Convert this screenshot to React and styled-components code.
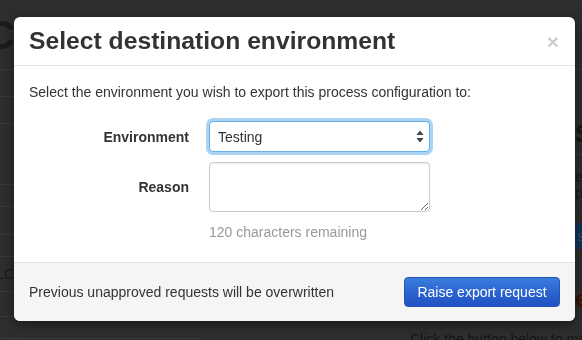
import React from 'react';
import styled, { createGlobalStyle } from 'styled-components';

const GlobalStyle = createGlobalStyle`
  html, body { margin: 0; padding: 0; }
  body {
    background: #2e2e2e;
    font-family: "Liberation Sans", Arial, sans-serif;
    overflow: hidden;
  }
`;

/* ---------- dimmed page behind the dialog ---------- */
const Page = styled.div`
  width: 582px;
  height: 340px;
  background: #2e2e2e;
  display: flex;
  flex-direction: column;
  overflow: hidden;
`;

const TopBar = styled.header`
  height: 70px;
  flex: none;
  display: flex;
  align-items: center;
  border-bottom: 1px solid #383838;
  box-sizing: border-box;
`;

const Logo = styled.span`
  margin-left: -14px;
  font-size: 40px;
  font-weight: bold;
  color: #1c1c1c;
  line-height: 1;
`;

const Columns = styled.div`
  flex: 1;
  display: grid;
  grid-template-columns: 200px 1fr;
`;

const Sidebar = styled.div`
  display: flex;
  flex-direction: column;
`;

const SideRow = styled.div`
  height: ${p => p.$h}px;
  flex: none;
  box-sizing: border-box;
  border-bottom: 1px solid #3a3a3a;
  font-size: 14px;
  color: #1a1a1a;
  display: flex;
  align-items: center;
  justify-content: flex-end;
  padding-right: 186px;
  white-space: nowrap;
`;

const Main = styled.div`
  display: flex;
  flex-direction: column;
  padding-left: 210px;
  padding-top: 50px;
`;

const BgHeading = styled.div`
  font-size: 24px;
  font-weight: bold;
  color: #181818;
  white-space: nowrap;
  margin-left: 165px;
  padding-bottom: 6px;
  border-bottom: 1px solid #3a3a3a;
`;

const BgText = styled.div`
  font-size: 14px;
  color: #1a1a1a;
  line-height: 16px;
  white-space: nowrap;
  margin-left: 165px;
  margin-top: ${p => p.$mt || 0}px;
`;

const BgButton = styled.div`
  margin: 22px 0 0 165px;
  height: 26px;
  width: 120px;
  background: #13335a;
  color: #3a4a60;
  font-size: 14px;
  line-height: 26px;
  padding-left: 2px;
`;

const BgRed = styled.div`
  margin: 36px 0 0 165px;
  font-size: 24px;
  font-weight: bold;
  color: #3e1208;
`;

const BgFoot = styled.div`
  margin-top: 18px;
  font-size: 14px;
  color: #151515;
  white-space: nowrap;
`;

/* ---------- dialog ---------- */
const Modal = styled.div`
  position: fixed;
  top: 17px;
  left: 14px;
  width: 561px;
  background: #fff;
  border-radius: 6px;
  box-shadow: 0 3px 12px rgba(0, 0, 0, 0.5);
  overflow: hidden;
  color: #333;
`;

const Header = styled.div`
  height: 49px;
  box-sizing: border-box;
  padding: 0 16px 0 15px;
  display: flex;
  align-items: center;
  justify-content: space-between;
  border-bottom: 1px solid #e5e5e5;
`;

const Title = styled.h3`
  margin: 0;
  font-size: 24.7px;
  font-weight: bold;
  color: #333;
`;

const Close = styled.button`
  border: 0;
  background: none;
  padding: 0;
  font-family: inherit;
  font-size: 21px;
  font-weight: bold;
  color: #000;
  opacity: 0.2;
  line-height: 1;
  cursor: pointer;
`;

const Body = styled.div`
  padding: 15px 15px 19px;
`;

const Intro = styled.p`
  margin: 0;
  font-size: 14px;
  line-height: 22px;
`;

const Form = styled.div`
  margin-top: 18px;
  display: grid;
  grid-template-columns: 160px 221px;
  column-gap: 20px;
  row-gap: 10px;
  align-items: center;
`;

const Label = styled.label`
  text-align: right;
  font-size: 14px;
  font-weight: bold;
  color: #333;
`;

const SelectWrap = styled.div`
  position: relative;
  height: 31px;
`;

const Select = styled.select`
  appearance: none;
  -webkit-appearance: none;
  width: 100%;
  height: 31px;
  box-sizing: border-box;
  border: 1px solid #66afe9;
  border-radius: 4px;
  box-shadow: 0 0 0 3px rgba(102, 175, 233, 0.55);
  padding: 0 8px;
  font-family: inherit;
  font-size: 14px;
  color: #333;
  background: #fff;
  outline: none;
`;

const Arrows = styled.svg`
  position: absolute;
  right: 6px;
  top: 9px;
  pointer-events: none;
`;

const Textarea = styled.textarea`
  display: block;
  width: 100%;
  height: 50px;
  box-sizing: border-box;
  border: 1px solid #ccc;
  border-radius: 4px;
  box-shadow: inset 0 1px 1px rgba(0, 0, 0, 0.075);
  resize: vertical;
  font-family: inherit;
  font-size: 14px;
`;

const Help = styled.div`
  grid-column: 2;
  margin-top: -1px;
  font-size: 14px;
  line-height: 22px;
  color: #999;
`;

const Footer = styled.div`
  border-top: 1px solid #e5e5e5;
  background: #f5f5f5;
  padding: 14px 15px 14px;
  display: flex;
  align-items: center;
  justify-content: space-between;
`;

const FooterText = styled.span`
  font-size: 14px;
  color: #333;
`;

const PrimaryButton = styled.button`
  width: 156px;
  height: 30px;
  border: 1px solid #2553b5;
  border-radius: 4px;
  background: linear-gradient(to bottom, #3a7ddd 0%, #2a62d0 55%, #2252c2 100%);
  color: #fff;
  font-family: inherit;
  font-size: 14px;
  padding: 0;
  cursor: pointer;
`;

const sideRows = [27, 27, 61, 22, 28, 22, 35, 25, 22, 22];

export default function App() {
  return (
    <>
      <GlobalStyle />
      <Page>
        <TopBar>
          <Logo>C</Logo>
        </TopBar>
        <Columns>
          <Sidebar>
            {sideRows.map((h, i) => (
              <SideRow key={i} $h={h}>{i === 6 ? 'ETL LC' : ''}</SideRow>
            ))}
          </Sidebar>
          <Main>
            <BgHeading>Summary</BgHeading>
            <BgText $mt={14}>export</BgText>
            <BgText>process</BgText>
            <BgButton>s</BgButton>
            <BgRed>e</BgRed>
            <BgFoot>Click the button below to make</BgFoot>
          </Main>
        </Columns>
      </Page>

      <Modal role="dialog">
        <Header>
          <Title>Select destination environment</Title>
          <Close aria-label="Close">×</Close>
        </Header>
        <Body>
          <Intro>Select the environment you wish to export this process configuration to:</Intro>
          <Form>
            <Label>Environment</Label>
            <SelectWrap>
              <Select defaultValue="Testing">
                <option>Testing</option>
                <option>Production</option>
              </Select>
              <Arrows width="8" height="13" viewBox="0 0 8 13">
                <path d="M4 0.5 L7.5 5 L0.5 5 Z" fill="#444" />
                <path d="M4 12.5 L7.5 8 L0.5 8 Z" fill="#444" />
              </Arrows>
            </SelectWrap>
            <Label>Reason</Label>
            <Textarea />
            <Help>120 characters remaining</Help>
          </Form>
        </Body>
        <Footer>
          <FooterText>Previous unapproved requests will be overwritten</FooterText>
          <PrimaryButton>Raise export request</PrimaryButton>
        </Footer>
      </Modal>
    </>
  );
}
